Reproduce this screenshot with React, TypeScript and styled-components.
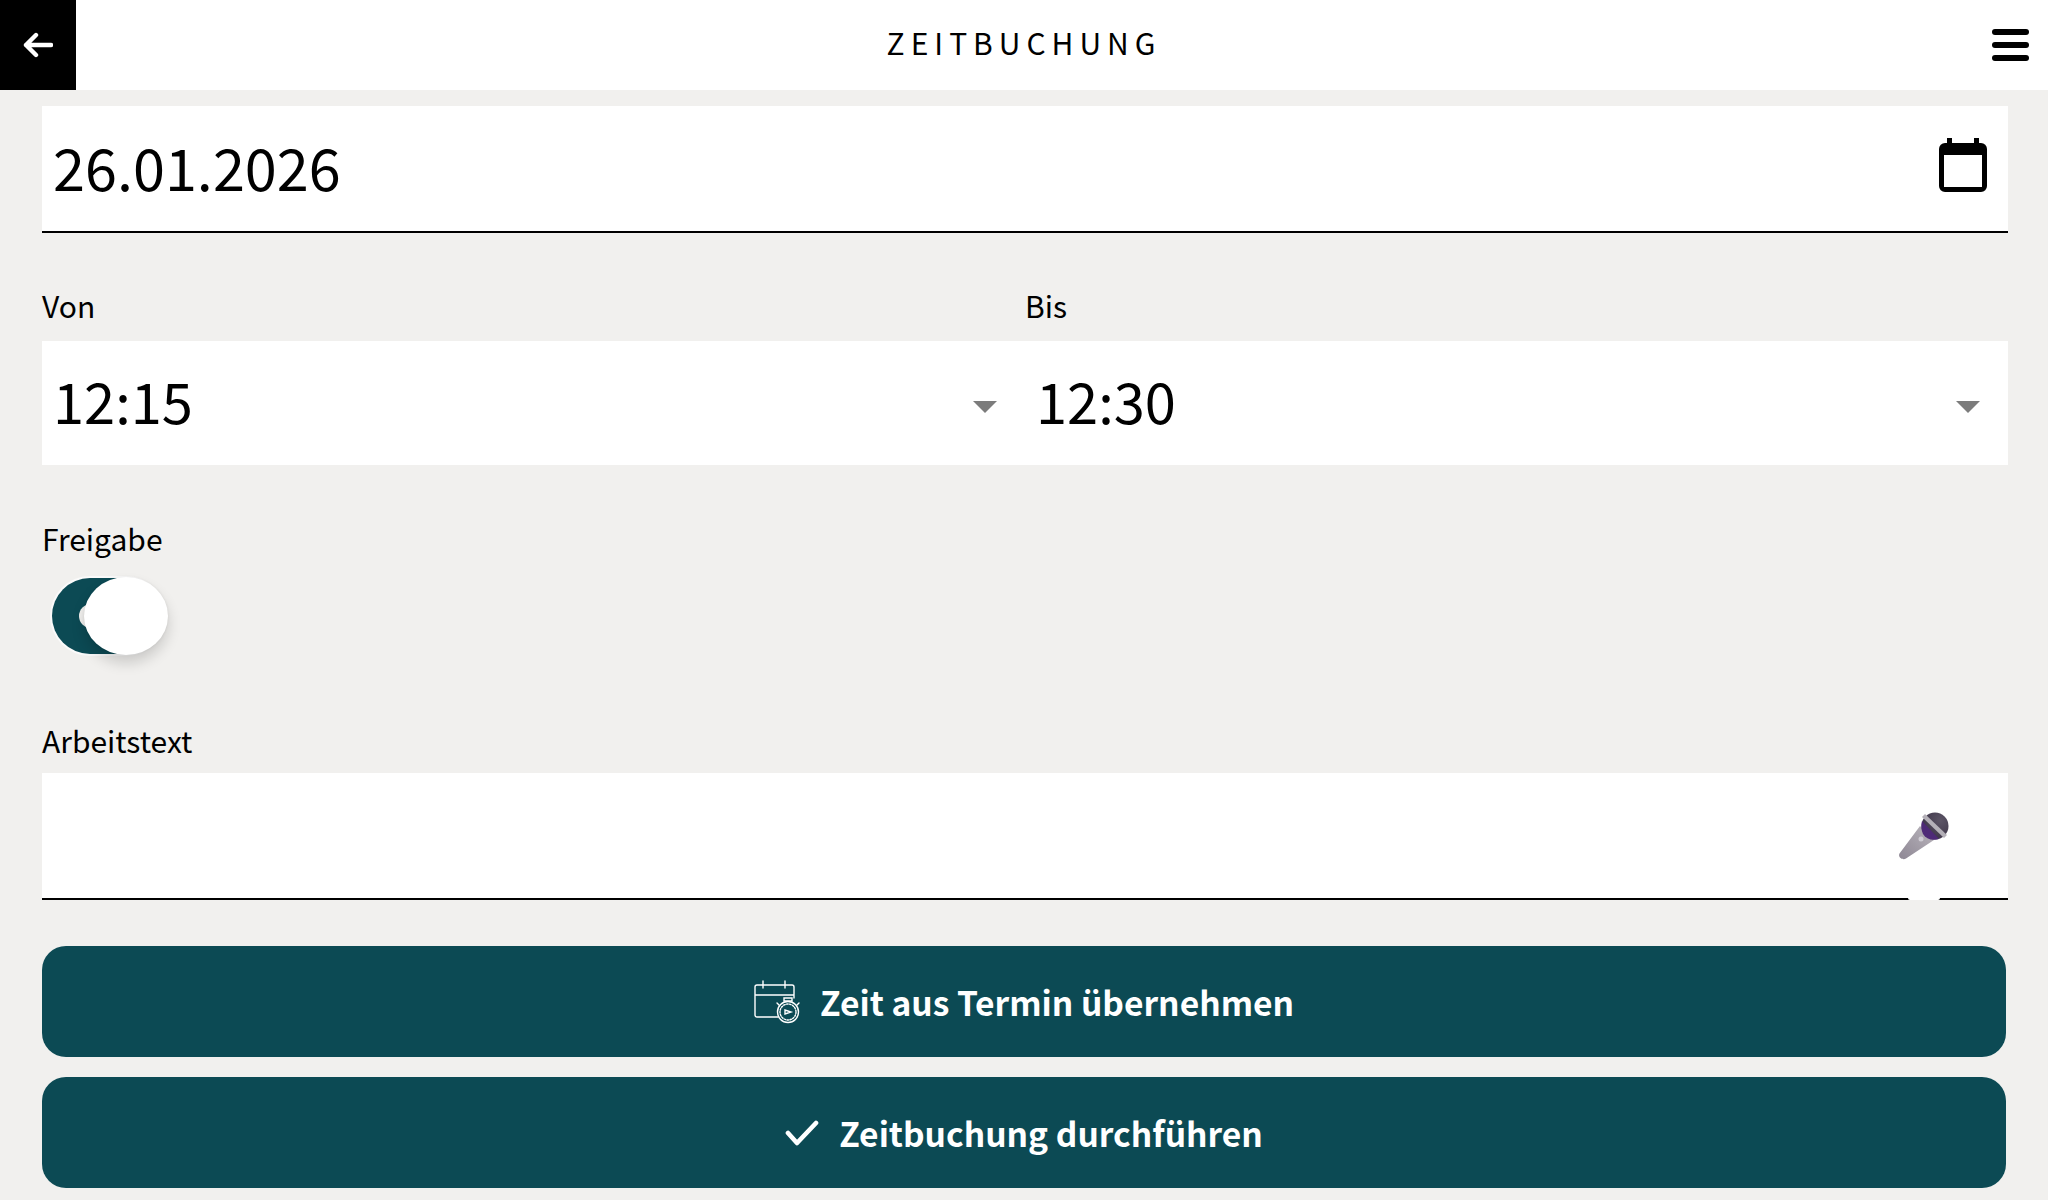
import React from "react";
import styled, { createGlobalStyle } from "styled-components";

const Global = createGlobalStyle`
  html, body { margin: 0; padding: 0; background: #f1f0ee; }
  body { font-family: "Noto Sans CJK JP", "Noto Sans", sans-serif; color: #000; }
`;
const Page = styled.div`
  width: 2048px; height: 1200px; overflow: hidden; display: flex; flex-direction: column; background: #f1f0ee;
`;
const Header = styled.header`
  height: 90px; flex: none; background: #fff; display: grid; grid-template-columns: 76px 1fr 76px; align-items: center;
`;
const BackButton = styled.div`
  height: 90px; background: #000; display: flex; align-items: center; justify-content: center; color: #fff;
`;
const Title = styled.h1`
  margin: 0 0 7px; font-size: 30px; line-height: 40px; font-weight: 400; letter-spacing: 6px; text-align: center;
`;
const MenuButton = styled.div`
  display: flex; flex-direction: column; gap: 7px; align-items: flex-end; padding-right: 19px;
`;
const MenuBar = styled.span`
  display: block; width: 37px; height: 6px; border-radius: 3px; background: #000;
`;
const Main = styled.main`
  padding: 16px 40px 0 42px; display: flex; flex-direction: column;
`;
const Field = styled.div<{ $underline?: boolean; $top?: number }>`
  position: relative; height: ${(p) => (p.$underline ? 127 : 124)}px; box-sizing: border-box; background: #fff;
  margin-top: ${(p) => p.$top ?? 0}px;
  display: flex; align-items: center; justify-content: space-between; padding: 0 21px 0 11px;
  border-bottom: ${(p) => (p.$underline ? "2px solid #000" : "none")};
`;
const DateValue = styled.span`
  font-size: 57.6px; line-height: 80px; font-weight: 400; margin-bottom: 6px;
`;
const TimeValue = styled.span`
  font-size: 56px; line-height: 80px; font-weight: 400; margin-bottom: 6px;
`;
const Label = styled.label`
  display: block; font-size: 30px; line-height: 40px; height: 40px;
`;
const Row = styled.div`
  display: grid; grid-template-columns: 983px 983px; margin-top: 52px;
`;
const Column = styled.div`
  display: flex; flex-direction: column; gap: 16px;
`;
const Caret = styled.span`
  width: 0; height: 0; border-left: 12px solid transparent; border-right: 12px solid transparent;
  border-top: 12px solid #7c7c7c; margin: 8px 7px 0 0;
`;
const Section = styled.section<{ $top: number }>`
  margin-top: ${(p) => p.$top}px; display: flex; flex-direction: column;
`;
const Toggle = styled.div`
  position: relative; width: 112px; height: 76px; margin: 20px 0 0 10px; border-radius: 38px;
  background: #0c4a54; box-shadow: 0 0 0 2px #fafafa;
`;
const ToggleDot = styled.span`
  position: absolute; left: 27px; top: 26px; width: 24px; height: 24px; border-radius: 50%; background: #f1f0ee;
`;
const ToggleThumb = styled.span`
  position: absolute; left: 32px; top: -1px; width: 84px; height: 78px; border-radius: 42px / 39px; background: #fff;
  box-shadow: 0 8px 14px rgba(0,0,0,.16), 0 0 3px rgba(0,0,0,.08);
`;
const MicBump = styled.span`
  position: absolute; left: 1866px; bottom: -2px; width: 32px; height: 2px; border-radius: 0 0 16px 16px; background: #fff;
`;
const MicWrap = styled.div`
  display: flex; margin: 0 38px 0 0;
`;
const Buttons = styled.div`
  display: flex; flex-direction: column; gap: 20px; margin-top: 46px; width: 1964px;
`;
const ActionButton = styled.button`
  height: 111px; border: 0; border-radius: 24px; background: #0c4a54; color: #fff; display: flex; align-items: center; justify-content: center;
  gap: 20px; font-family: inherit; font-size: 33.6px; font-weight: 700; padding: 0;
`;
const ButtonText = styled.span`
  line-height: 50px;
`;

const CalendarIcon = () => (
  <svg width="48" height="54" viewBox="0 0 48 54" style={{ marginBottom: 8 }}>
    <path fill="#000" fillRule="evenodd" d="M8 0h5v5h22V0h5v5h2a6 6 0 0 1 6 6v37a6 6 0 0 1-6 6H6a6 6 0 0 1-6-6V11a6 6 0 0 1 6-6h2zM5 17v32h38V17z" />
  </svg>
);
const BackIcon = () => (
  <svg width="30" height="26" viewBox="0 0 30 26" fill="none" stroke="#fff" strokeWidth="4.4" strokeLinecap="round" strokeLinejoin="round">
    <path d="M3 13h25M13 3 3 13l10 10" />
  </svg>
);
const MicIcon = () => (
  <svg width="50" height="48" viewBox="0 0 50 48">
    <defs>
      <linearGradient id="h" x1="0" y1="1" x2="1" y2="0"><stop offset="0" stopColor="#8e8794" /><stop offset="1" stopColor="#b9b5bc" /></linearGradient>
      <radialGradient id="d" cx=".7" cy=".3" r=".8"><stop offset="0" stopColor="#5c5566" /><stop offset="1" stopColor="#3a3145" /></radialGradient>
    </defs>
    <path d="M0.5 41.5 21 14 35 28 7 46.5c-3 2-8.500-1-6.500-5Z" fill="url(#h)" />
    <circle cx="22" cy="27" r="2.500" fill="#cfccd4" />
    <circle cx="36" cy="14" r="13.500" fill="url(#d)" />
    <path d="M23 9 40 27c-7 2-13 0-16-5-2-4-2-9-1-13Z" fill="#4e2a77" />
    <path d="M26 2 48 23l-3 3L23 5Z" fill="#b4b0b8" />
  </svg>
);
const TerminIcon = () => (
  <svg width="46" height="44" viewBox="0 0 46 44" fill="none" stroke="#fff" strokeWidth="1.4" strokeLinecap="round">
    <path d="M24 37H3a2 2 0 0 1-2-2V7a2 2 0 0 1 2-2h35a2 2 0 0 1 2 2v11M1 15h39M9 1v7M31 1v7" />
    <circle cx="34" cy="32" r="10.500" />
    <circle cx="34" cy="32" r="8" strokeDasharray="1.500 1.500" />
    <path d="M30 18h8v3h-8zM23 23l2 2M45 23l-2 2M31 30v4l6-2z" />
  </svg>
);
const CheckIcon = () => (
  <svg width="34" height="26" viewBox="0 0 34 26" fill="none" stroke="#fff" strokeWidth="4.600" strokeLinecap="round" strokeLinejoin="round">
    <path d="M3 13l9 10L31 3" />
  </svg>
);

export default function App() {
  return (
    <Page>
      <Global />
      <Header>
        <BackButton><BackIcon /></BackButton>
        <Title>ZEITBUCHUNG</Title>
        <MenuButton><MenuBar /><MenuBar /><MenuBar /></MenuButton>
      </Header>
      <Main>
        <Field $underline>
          <DateValue>26.01.2026</DateValue>
          <CalendarIcon />
        </Field>
        <Row>
          <Column>
            <Label>Von</Label>
            <Field><TimeValue>12:15</TimeValue><Caret /></Field>
          </Column>
          <Column>
            <Label>Bis</Label>
            <Field><TimeValue>12:30</TimeValue><Caret /></Field>
          </Column>
        </Row>
        <Section $top={53}>
          <Label>Freigabe</Label>
          <Toggle><ToggleDot /><ToggleThumb /></Toggle>
        </Section>
        <Section $top={66}>
          <Label>Arbeitstext</Label>
          <Field $underline $top={13} style={{ justifyContent: "flex-end" }}>
            <MicWrap><MicIcon /></MicWrap>
            <MicBump />
          </Field>
        </Section>
        <Buttons>
          <ActionButton><TerminIcon /><ButtonText>Zeit aus Termin übernehmen</ButtonText></ActionButton>
          <ActionButton><CheckIcon /><ButtonText>Zeitbuchung durchführen</ButtonText></ActionButton>
        </Buttons>
      </Main>
    </Page>
  );
}
